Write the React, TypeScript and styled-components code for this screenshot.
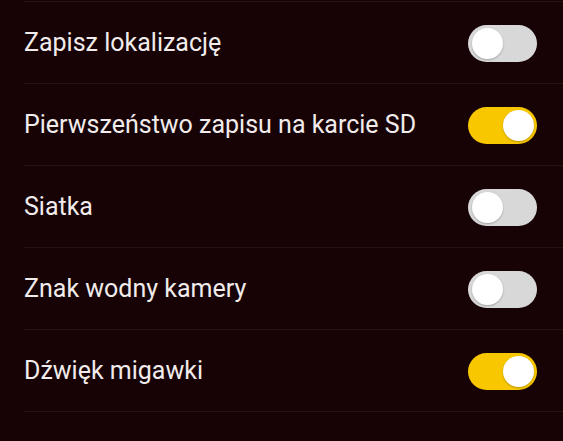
import React, { useState } from "react";
import styled, { createGlobalStyle } from "styled-components";

const Global = createGlobalStyle`
  html, body { margin: 0; padding: 0; background: #170306; }
  body { font-family: Roboto, "Noto Sans", sans-serif; }
`;

const List = styled.div`
  width: 563px;
  height: 441px;
  background: #170306;
  padding-top: 1px;
  box-sizing: border-box;
  overflow: hidden;
`;

const Row = styled.div`
  display: flex;
  align-items: center;
  justify-content: space-between;
  height: 82px;
  margin-left: 24px;
  padding-right: 26px;
  border-top: 1px solid #28100f;
  box-sizing: border-box;
`;

const Label = styled.span`
  color: #f1eceb;
  font-size: 25px;
  font-weight: 400;
  line-height: 1;
  margin-top: 0;
`;

const Track = styled.button<{ $on: boolean }>`
  position: relative;
  width: 69px;
  height: 37px;
  border-radius: 19px;
  border: none;
  padding: 0;
  cursor: pointer;
  background: ${(p) => (p.$on ? "#f8c700" : "#d8d8d8")};
  margin-top: 1px;
`;

const Knob = styled.span<{ $on: boolean }>`
  position: absolute;
  top: 3px;
  left: ${(p) => (p.$on ? "35px" : "4px")};
  width: 31px;
  height: 31px;
  border-radius: 50%;
  background: #ffffff;
  box-shadow: 0 1px 2px rgba(0, 0, 0, 0.25);
`;

const items = [
  { label: "Zapisz lokalizację", on: false },
  { label: "Pierwszeństwo zapisu na karcie SD", on: true },
  { label: "Siatka", on: false },
  { label: "Znak wodny kamery", on: false },
  { label: "Dźwięk migawki", on: true },
];

export default function App() {
  const [state, setState] = useState(items.map((i) => i.on));
  return (
    <>
      <Global />
      <List>
        {items.map((it, i) => (
          <Row key={it.label}>
            <Label>{it.label}</Label>
            <Track
              $on={state[i]}
              onClick={() => setState((s) => s.map((v, j) => (j === i ? !v : v)))}
            >
              <Knob $on={state[i]} />
            </Track>
          </Row>
        ))}
        <Row />
      </List>
    </>
  );
}
